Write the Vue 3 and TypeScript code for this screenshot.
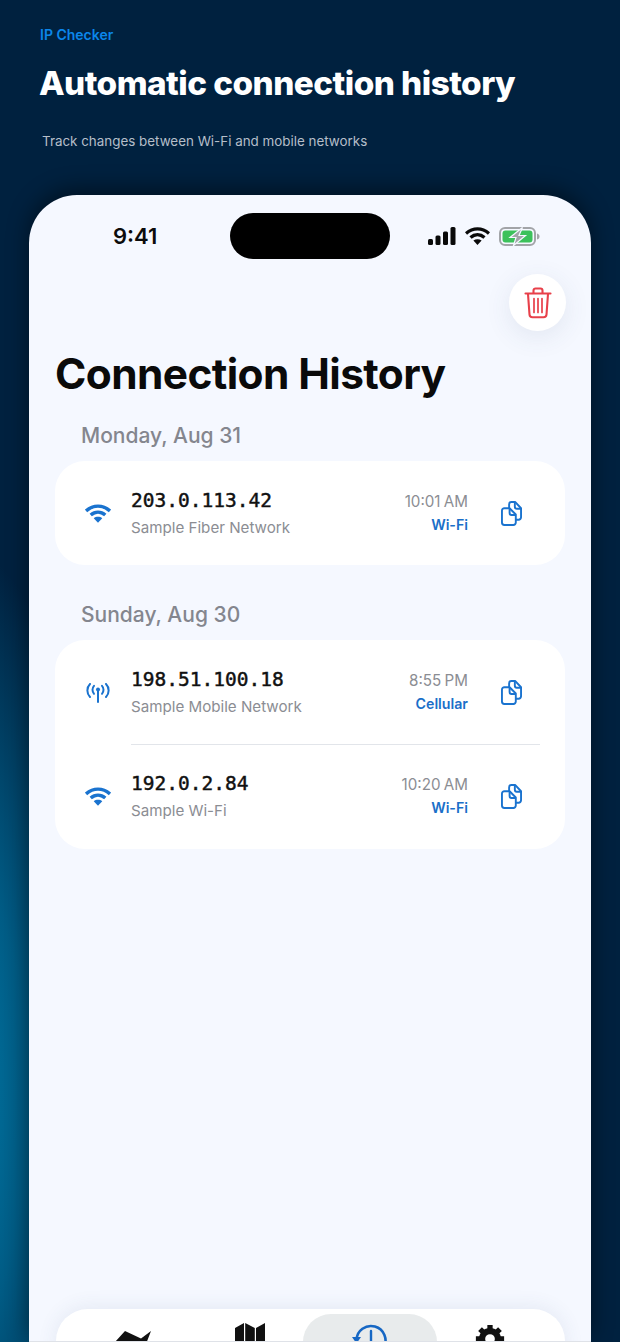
<script setup lang="ts">
type Kind = 'wifi' | 'cell'
interface Conn { ip: string; name: string; time: string; type: string; kind: Kind }
interface Group { day: string; items: Conn[] }

const groups: Group[] = [
  {
    day: 'Monday, Aug 31',
    items: [{ ip: '203.0.113.42', name: 'Sample Fiber Network', time: '10:01 AM', type: 'Wi-Fi', kind: 'wifi' }],
  },
  {
    day: 'Sunday, Aug 30',
    items: [
      { ip: '198.51.100.18', name: 'Sample Mobile Network', time: '8:55 PM', type: 'Cellular', kind: 'cell' },
      { ip: '192.0.2.84', name: 'Sample Wi-Fi', time: '10:20 AM', type: 'Wi-Fi', kind: 'wifi' },
    ],
  },
]
</script>

<template>
  <div class="page">
    <header class="promo">
      <div class="brand">IP Checker</div>
      <h1 class="headline">Automatic connection history</h1>
      <p class="sub">Track changes between Wi-Fi and mobile networks</p>
    </header>

    <main class="phone">
      <div class="status">
        <span class="clock">9:41</span>
        <span class="island"></span>
        <div class="status-icons">
          <svg width="28" height="18" viewBox="0 0 28 18">
            <rect x="0" y="12" width="5" height="6" rx="1.5" fill="#0a0a0a" />
            <rect x="7.5" y="8.5" width="5" height="9.5" rx="1.5" fill="#0a0a0a" />
            <rect x="15" y="4.5" width="5" height="13.5" rx="1.5" fill="#0a0a0a" />
            <rect x="22.5" y="0" width="5" height="18" rx="1.5" fill="#0a0a0a" />
          </svg>
          <svg width="25" height="18" viewBox="0 0 25 18">
            <path d="M1 6.500C8 .4 17 .4 24 6.500M5.500 10.500c4.200-3.700 9.800-3.700 14 0" fill="none" stroke="#0a0a0a" stroke-width="3.300" />
            <path d="M12.500 18 8.400 13.500c2.400-1.800 5.800-1.800 8.200 0z" fill="#0a0a0a" />
          </svg>
          <svg width="41" height="19" viewBox="0 0 41 19">
            <rect x="1" y="1" width="35" height="17" rx="5" fill="none" stroke="#a2a4a8" stroke-width="2" />
            <rect x="3.500" y="3.500" width="30" height="12" rx="3" fill="#3cc15b" />
            <path d="M38 6.500c1.800.5 2.500 1.500 2.500 3s-.7 2.500-2.500 3z" fill="#a2a4a8" />
            <path d="M23.500 .5 11 10.500h6L14.500 18.500 26.500 8.500h-6.500z" fill="#a2a4a8" stroke="#f5f8ff" stroke-width="1.200" />
          </svg>
        </div>
      </div>

      <div class="action-row">
        <button type="button" class="trash">
          <svg width="28" height="32" viewBox="0 0 28 32" fill="none" stroke="#e8404a" stroke-width="2.100" stroke-linecap="round" stroke-linejoin="round">
            <path d="M1.500 6.500h25" />
            <path d="M9.500 6V3.500a2 2 0 0 1 2-2h5a2 2 0 0 1 2 2V6" />
            <path d="M4 7l1.500 20.500a3 3 0 0 0 3 2.800h11a3 3 0 0 0 3-2.800L24 7" />
            <path d="M10 11.500v14M14 11.500v14M18 11.500v14" stroke-width="1.700" />
          </svg>
        </button>
      </div>

      <h2 class="title">Connection History</h2>

      <section v-for="g in groups" :key="g.day" class="group">
        <h3 class="day">{{ g.day }}</h3>
        <div class="card">
          <div v-for="c in g.items" :key="c.ip" class="row">
            <div class="kind">
              <svg v-if="c.kind === 'wifi'" width="26" height="19" viewBox="0 0 25 18">
                <path d="M1 6.500C8 .4 17 .4 24 6.500M5.500 10.500c4.200-3.700 9.800-3.700 14 0" fill="none" stroke="#1a73cf" stroke-width="3.300" />
                <path d="M12.500 18 8.400 13.500c2.400-1.800 5.800-1.800 8.200 0z" fill="#1a73cf" />
              </svg>
              <svg v-else class="cell" width="24" height="20" viewBox="0 0 24 20" fill="none" stroke="#1a73cf" stroke-width="2" stroke-linecap="round">
                <path d="M12 8v11" />
                <circle cx="12" cy="6.500" r="2" fill="#1a73cf" stroke="none" />
                <path d="M8 2.800c-2 2.200-2 5.800 0 8M16 2.800c2 2.200 2 5.800 0 8" />
                <path d="M4 1c-3.500 3.500-3.500 9.500 0 13M20 1c3.500 3.500 3.500 9.500 0 13" />
              </svg>
            </div>
            <div class="info">
              <div class="ip">{{ c.ip }}</div>
              <div class="name">{{ c.name }}</div>
            </div>
            <div class="meta">
              <div class="time">{{ c.time }}</div>
              <div class="type">{{ c.type }}</div>
            </div>
            <svg class="copy" width="21" height="25" viewBox="0 0 22 26" fill="none" stroke="#1a73cf" stroke-width="2" stroke-linejoin="round">
              <path d="M3.500 7.500H9l6.500 6.500v8.500a2.500 2.500 0 0 1-2.500 2.500H3.500A2.500 2.500 0 0 1 1 22.500V10a2.500 2.500 0 0 1 2.500-2.500z" />
              <path d="M8.500 8V3.500A2.500 2.500 0 0 1 11 1h4l6 6.500V17a2.500 2.500 0 0 1-2.500 2.500h-3" />
              <path d="M14.500 1v5a2 2 0 0 0 2 2H21M9 8v4.500a2 2 0 0 0 2 2h4.500" />
            </svg>
          </div>
        </div>
      </section>

      <nav class="tabbar">
        <div class="tab">
          <svg width="38" height="34" viewBox="0 0 38 34">
            <path d="M2 20 12 9l16 7.500L38 9l-5 13-5 12H2z" fill="#111" />
          </svg>
        </div>
        <div class="tab">
          <svg width="32" height="34" viewBox="0 0 32 34" fill="#111">
            <path d="M1 6l9-5v26l-9 5zM11.200 1l9.600 5v26l-9.600-5zM22 6l9-5v26l-9 5z" />
          </svg>
        </div>
        <div class="tab active">
          <svg width="36" height="34" viewBox="0 0 36 34" fill="none" stroke="#1667c4" stroke-width="2.600" stroke-linecap="round">
            <path d="M4.500 18A14.500 14.500 0 1 1 9 29" />
            <path d="M19 9v12" stroke-width="2.400" />
            <path d="M0 15h9l-4.500 6.500z" fill="#1667c4" stroke="none" />
          </svg>
        </div>
        <div class="tab">
          <svg width="30" height="34" viewBox="0 0 34 34" fill="none" stroke="#111">
            <circle cx="17" cy="17" r="9" stroke-width="7" />
            <path d="M17 1v6M17 27v6M1 17h6M27 17h6M5.700 5.700l4.200 4.200M24.100 24.100l4.200 4.200M5.700 28.300l4.200-4.200M24.100 9.900l4.200-4.200" stroke-width="6" />
          </svg>
        </div>
      </nav>
    </main>
  </div>
</template>

<style>
html,
body {
  margin: 0;
  background: #00213f;
}
</style>

<style scoped>
.page {
  width: 620px;
  height: 1342px;
  overflow: hidden;
  box-sizing: border-box;
  padding-top: 26px;
  font-family: Inter, 'Liberation Sans', sans-serif;
  background:
    radial-gradient(ellipse 170px 560px at -50px 1100px, #007fae 0%, rgba(0, 106, 150, 0.8) 45%, rgba(0, 33, 63, 0) 100%),
    #00213f;
  display: flex;
  flex-direction: column;
}
.promo {
  padding-left: 40px;
  flex-shrink: 0;
}
.brand {
  font-size: 14px;
  line-height: 17px;
  font-weight: 600;
  color: #0b86ea;
}
.headline {
  margin: 20px 0 0 -1px;
  font-size: 33.3px;
  line-height: 40px;
  font-weight: 800;
  letter-spacing: -0.53px;
  color: #fff;
}
.sub {
  margin: 29px 0 0 2px;
  font-size: 13.4px;
  line-height: 18px;
  color: #b5bec9;
}
.phone {
  position: relative;
  margin: 45px 29px 0;
  flex: 1;
  background: #f5f8ff;
  border-radius: 48px 48px 0 0;
  box-shadow: 0 -6px 22px rgba(0, 0, 0, 0.45);
  padding: 18px 26px 0;
}
.phone::after {
  content: '';
  position: absolute;
  left: 0;
  right: 0;
  bottom: 0;
  height: 1px;
  background: #dfe2e8;
}
.status {
  display: flex;
  align-items: center;
  height: 46px;
}
.clock {
  width: 175px;
  padding-left: 58px;
  box-sizing: border-box;
  font-size: 22px;
  font-weight: 600;
  color: #0c0c0c;
}
.island {
  width: 160px;
  height: 46px;
  border-radius: 23px;
  background: #000;
}
.status-icons {
  display: flex;
  align-items: center;
  gap: 9px;
  margin-left: 38px;
}
.action-row {
  display: flex;
  justify-content: flex-end;
  margin: 15px -1px 0 0;
}
.trash {
  width: 57px;
  height: 57px;
  padding: 0;
  border: 0;
  border-radius: 50%;
  background: #fff;
  box-shadow: 0 6px 26px rgba(60, 80, 120, 0.1);
  display: flex;
  align-items: center;
  justify-content: center;
}
.title {
  margin: 20px 0 0;
  font-size: 42.4px;
  line-height: 46px;
  font-weight: 700;
  letter-spacing: -0.6px;
  color: #0a0a0a;
}
.group {
  margin-top: 25px;
}
.group + .group {
  margin-top: 36px;
}
.day {
  margin: 14px 0 0 26px;
  font-size: 21px;
  line-height: 28px;
  font-weight: 500;
  color: #84868e;
}
.card {
  margin-top: 11px;
  background: #fff;
  border-radius: 30px;
  overflow: hidden;
}
.row {
  display: flex;
  align-items: center;
  height: 104px;
  padding-left: 30px;
  padding-right: 43px;
  position: relative;
}
.row + .row {
  height: 105px;
}
.row + .row::before {
  content: '';
  position: absolute;
  top: 0;
  left: 76px;
  right: 25px;
  height: 1px;
  background: #e2e5ea;
}
.kind {
  width: 46px;
  flex-shrink: 0;
  display: flex;
}
.cell {
  margin: 1px 0 0 1px;
}
.info {
  flex: 1;
}
.ip {
  font-family: 'DejaVu Sans Mono', 'Liberation Mono', monospace;
  font-size: 19.5px;
  line-height: 24px;
  font-weight: 400;
  -webkit-text-stroke: 0.45px #111;
  color: #111;
}
.name {
  margin-top: 5px;
  font-size: 15.15px;
  line-height: 20px;
  color: #8b8d93;
}
.meta {
  text-align: right;
  margin-right: 33px;
}
.time {
  font-size: 15.2px;
  line-height: 20px;
  word-spacing: -1px;
  color: #8b8d93;
}
.type {
  margin-top: 3px;
  font-size: 14.2px;
  line-height: 20px;
  font-weight: 600;
  color: #1a6fc9;
}
.copy {
  flex-shrink: 0;
}
.tabbar {
  position: absolute;
  left: 27px;
  right: 26px;
  top: 1114px;
  height: 90px;
  background: #fff;
  border-radius: 32px;
  box-shadow: 0 -2px 20px rgba(60, 80, 120, 0.09);
  padding: 5px 22px 0 10px;
  display: grid;
  grid-template-columns: 131px 106px 134px 1fr;
  box-sizing: border-box;
}
.tab {
  display: flex;
  justify-content: center;
  padding-top: 8px;
  border-radius: 28px;
}
.tab.active {
  background: #e8ebec;
}
</style>
